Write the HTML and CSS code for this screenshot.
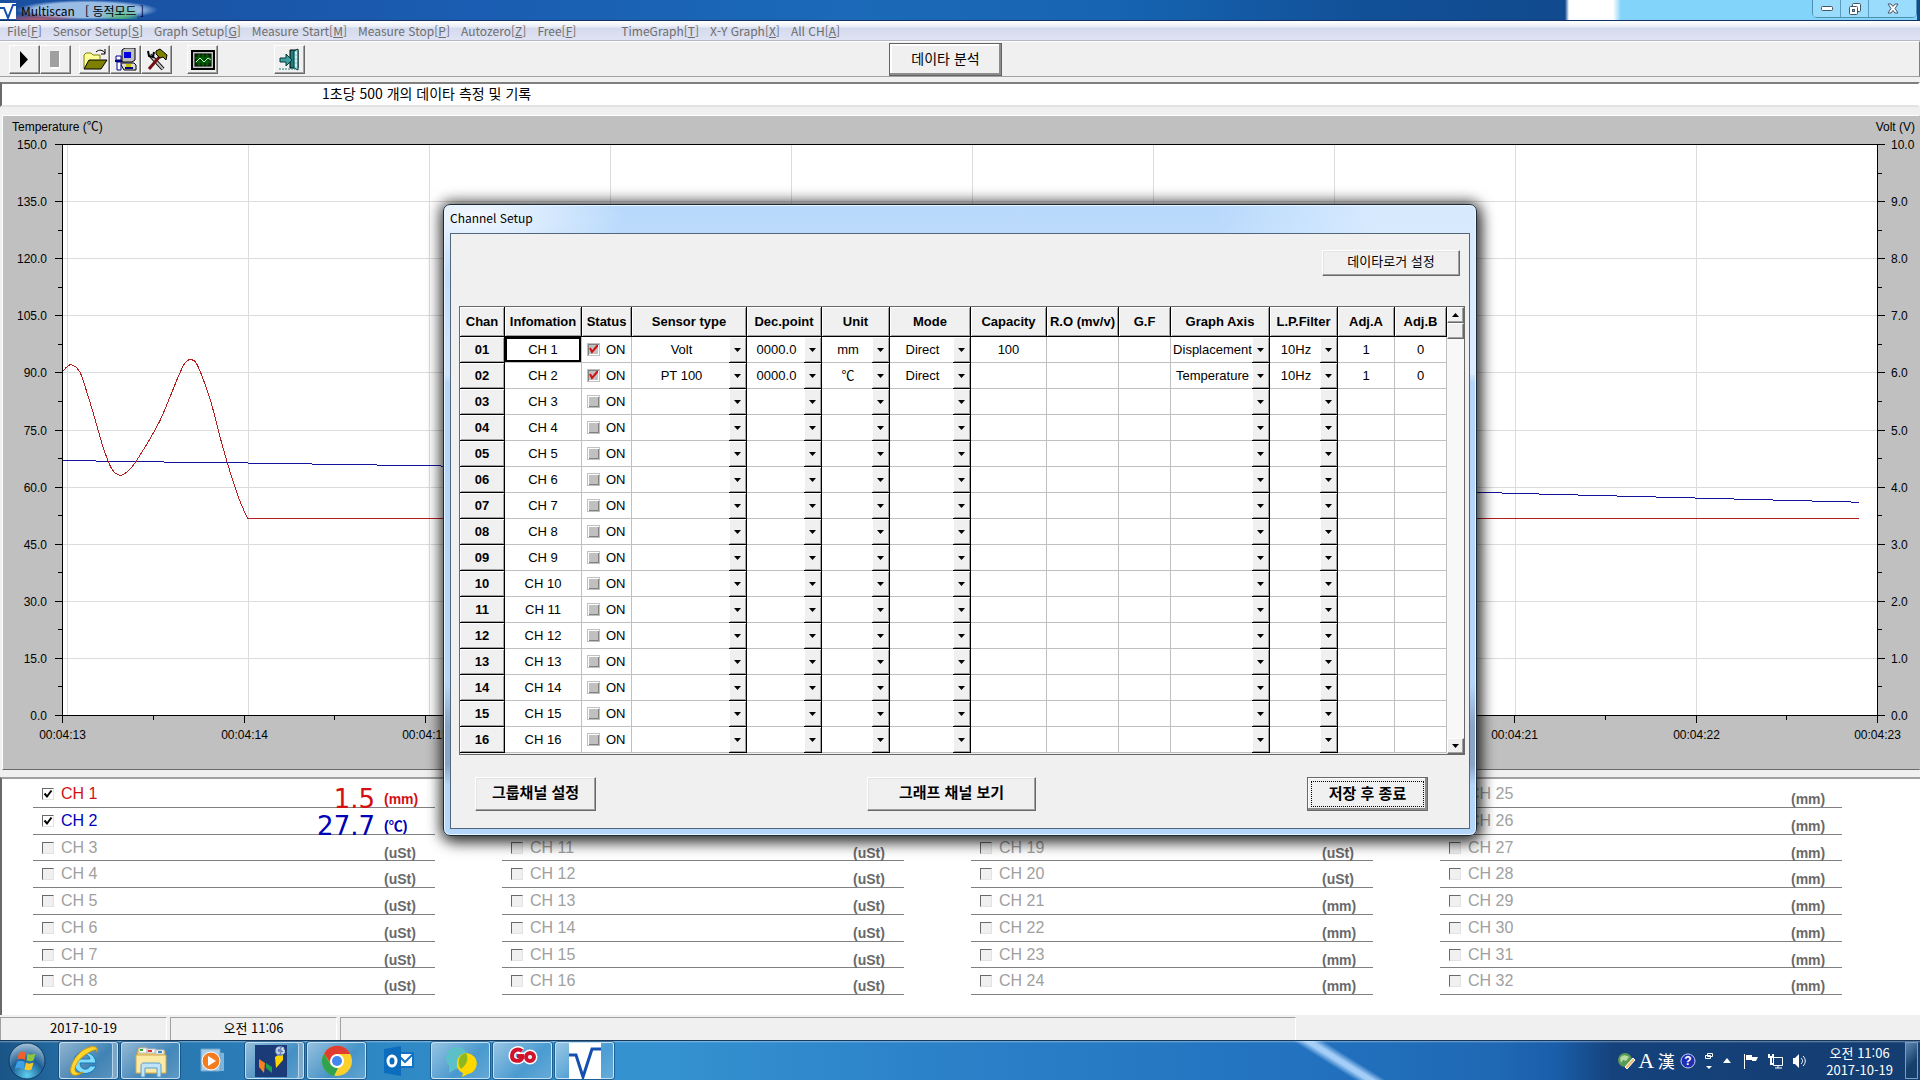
FILE: index.html
```html
<!DOCTYPE html>
<html lang="ko">
<head>
  <meta charset="UTF-8" />
  <meta name="viewport" content="width=device-width, initial-scale=1" />
  <title>Multiscan</title>
  <link rel="stylesheet" href="styles.css">
</head>
<body>
  <main class="app">
    <header class="titlebar">
      <svg class="app-icon" viewBox="0 0 16 16"><rect width="16" height="16" fill="#fff"/><path d="M0 5h4l4 10 5-13h3" fill="none" stroke="#1450b0" stroke-width="2"/></svg>
      <h1 class="app-title">Multiscan &nbsp; [ <span class="mode">동적모드</span> ]</h1>
      <div class="behind"></div>
      <div class="window-buttons">
        <button type="button" aria-label="Minimize"><svg width="12" height="5"><rect x=".5" y=".5" width="11" height="4" rx="1" fill="#fff" stroke="#456"/></svg></button>
        <button type="button" aria-label="Restore"><svg width="12" height="12" fill="#fff" stroke="#456"><rect x="3.500" y=".5" width="8" height="8" rx="1"/><rect x=".5" y="3.500" width="8" height="8" rx="1"/><rect x="3.500" y="6.500" width="2" height="2" fill="#8bd"/></svg></button>
        <button type="button" class="close" aria-label="Close"><svg width="12" height="11"><path d="M1 1h3l2 2.500L8 1h3L8 5.500 11 10H8L6 7.500 4 10H1l3-4.500z" fill="#fff" stroke="#456"/></svg></button>
      </div>
    </header>

    <nav class="menubar">
      <a href="#">File[<u>F</u>]</a>
      <a href="#">Sensor Setup[<u>S</u>]</a>
      <a href="#">Graph Setup[<u>G</u>]</a>
      <a href="#">Measure Start[<u>M</u>]</a>
      <a href="#">Measure Stop[<u>P</u>]</a>
      <a href="#">Autozero[<u>Z</u>]</a>
      <a href="#">Free[<u>F</u>]</a>
      <a href="#" class="graphs">TimeGraph[<u>T</u>]</a>
      <a href="#">X-Y Graph[<u>X</u>]</a>
      <a href="#">All CH[<u>A</u>]</a>
    </nav>

    <div class="toolbar">
      <div class="tool-group">
        <button type="button" aria-label="Start"><svg width="24" height="24"><path d="M7 3l8 8.500L7 20z" fill="#000"/></svg></button>
        <button type="button" aria-label="Stop"><svg width="24" height="24"><path d="M7 4h9v17H7z" fill="#fff"/><path d="M6 3h9v16H6z" fill="#a0a0a0"/></svg></button>
      </div>
      <div class="tool-group">
        <button type="button" aria-label="Open"><svg width="26" height="24"><path d="M2 20V7l2-2h5l2 2h7v4" fill="#ffff9c" stroke="#808000"/><path d="M2 21l5-9h18l-6 9z" fill="#808000" stroke="#000"/><path d="M14 4c3-3 7-2 9 1m0-4v5h-4" fill="none" stroke="#000"/></svg></button>
        <button type="button" aria-label="Sensor setup"><svg width="24" height="24"><path d="M8 2l3-2h10v12l-3 2H8z" fill="#c0c0c0" stroke="#000"/><rect x="10" y="4" width="7" height="6" fill="#0000e0"/><path d="M6 15h14l2 2v5H10z" fill="#d8d8d8" stroke="#000"/><path d="M2 8h5v4H2zM3 14h4v8H3z" fill="#fff" stroke="#000080"/><path d="M1 12h7v2H1z" fill="#000080"/><path d="M12 16h5v3h-5z" fill="#c8c000"/><path d="M11 20h8" stroke="#000080" stroke-width="2"/></svg></button>
        <button type="button" aria-label="Tools"><svg width="24" height="24"><path d="M5 7l13 14" stroke="#000" stroke-width="4"/><path d="M5 7l13 14" stroke="#c0c0c0" stroke-width="2"/><path d="M3 3l1 5 4 1 1-5" fill="none" stroke="#000" stroke-width="2"/><path d="M16 7L4 21" stroke="#701010" stroke-width="3"/><path d="M11 3l4-2 7 6-1 5-3-3-3 1-4-4z" fill="#808000" stroke="#000"/></svg></button>
      </div>
      <div class="tool-group graph">
        <button type="button" aria-label="Graph"><svg width="24" height="24"><rect x="1" y="3" width="22" height="18" fill="#c0c0c0" stroke="#000" stroke-width="2"/><rect x="4" y="6" width="16" height="12" fill="#063806" stroke="#000"/><path d="M4 10h16M4 14h16M8 6v12M12 6v12M16 6v12" stroke="#087008"/><path d="M5 14l4-4 4 4 4-4 3 2" fill="none" stroke="#b8ffd0"/></svg></button>
      </div>
      <div class="tool-group exit">
        <button type="button" aria-label="Exit"><svg width="24" height="24"><path d="M12 2h8v18h-8z" fill="#208080" stroke="#000"/><path d="M16 3l4-2v21l-4-2z" fill="#a0e0e0" stroke="#003838"/><path d="M18 4v15" stroke="#fff" stroke-dasharray="2 2"/><path d="M2 10h6V6l6 6-6 6v-4H2z" fill="#40a0a0" stroke="#003838"/><path d="M1 21h16" stroke="#208080" stroke-dasharray="2 1"/></svg></button>
      </div>
      <button type="button" class="analyze">데이타 분석</button>
    </div>

    <p class="message">1초당 500 개의 데이타 측정 및 기록</p>

    <section class="graph-panel">
      <svg id="graph" class="graph-svg" role="img" aria-label="Time graph"></svg>
    </section>

    <section class="channels" id="channels"></section>

    <footer class="statusbar">
      <span>2017-10-19</span>
      <span>오전 11:06</span>
      <span class="wide"></span>
    </footer>

    <div class="dialog-layer">
      <section class="dialog" role="dialog" aria-labelledby="dialog-title">
        <h2 class="dialog-title" id="dialog-title">Channel Setup</h2>
        <div class="dialog-body">
          <div class="dialog-top">
            <button type="button" class="btn logger">데이타로거 설정</button>
          </div>
          <div class="grid-box">
            <table class="setup">
              <colgroup>
                <col class="c-chan"><col class="c-info"><col class="c-status"><col class="c-sensor"><col class="c-dec"><col class="c-unit"><col class="c-mode"><col class="c-cap"><col class="c-ro"><col class="c-gf"><col class="c-axis"><col class="c-filter"><col class="c-adja"><col class="c-adjb">
              </colgroup>
              <thead>
                <tr>
                  <th>Chan</th><th>Infomation</th><th>Status</th><th>Sensor type</th><th>Dec.point</th><th>Unit</th><th>Mode</th><th>Capacity</th><th>R.O (mv/v)</th><th>G.F</th><th>Graph Axis</th><th>L.P.Filter</th><th>Adj.A</th><th>Adj.B</th>
                </tr>
              </thead>
              <tbody id="setup-rows"></tbody>
            </table>
            <div class="scrollbar">
              <button type="button" aria-label="Scroll up"><svg width="7" height="4"><path d="M0 4h7L3.500 0z"/></svg></button>
              <div class="thumb"></div>
              <button type="button" class="down" aria-label="Scroll down"><svg width="7" height="4"><path d="M0 0h7L3.500 4z"/></svg></button>
            </div>
          </div>
          <div class="dialog-actions">
            <button type="button" class="btn group">그룹채널 설정</button>
            <button type="button" class="btn view">그래프 채널 보기</button>
            <button type="button" class="btn save"><span>저장 후 종료</span></button>
          </div>
        </div>
      </section>
    </div>
  </main>

  <footer class="taskbar">
    <button type="button" class="start" aria-label="Start">
      <svg width="38" height="38" viewBox="0 0 38 38">
        <defs><radialGradient id="orb" cx=".5" cy=".9" r=".9"><stop offset="0" stop-color="#5fd0f0"/><stop offset=".5" stop-color="#1c5f96"/><stop offset="1" stop-color="#a8c4d8"/></radialGradient></defs>
        <circle cx="19" cy="19" r="18" fill="url(#orb)" stroke="#0d3a60"/>
        <path d="M11 11c3-2 5-1 7 0l-1 7c-3-1-5-2-8 0z" fill="#f0602c"/><path d="M19.500 11.500c3 2 5 1 8 0l-2 7c-2 1-4 1-7 0z" fill="#8cc63c"/>
        <path d="M9 20c3-2 5-1 7.500 0l-1 7c-3-1-5-2-8.500 0z" fill="#3fa0ea"/><path d="M18 20.500c3 2 5 1 7.500 0l-2 7c-2 1-4 1-7 0z" fill="#fcc628"/>
      </svg>
    </button>
    <button type="button" class="task stacked" aria-label="Internet Explorer">
      <svg width="34" height="34" viewBox="0 0 34 34"><path d="M28 19H12c0 7 8 8 10 3h6c-4 11-22 10-22-4S27 5 28 19zM12 15h10c-1-6-9-6-10 0z" fill="#7fdcff" stroke="#1879b8"/><path d="M29 8c2-8-8-6-15-1C6 13 1 24 3 29c2 4 8 2 12-1-4 2-9 1-8-4 1-5 7-12 13-15 5-3 10-5 9-1z" fill="#fcd62c" stroke="#d09a10"/></svg>
    </button>
    <button type="button" class="task" aria-label="Explorer">
      <svg width="34" height="34" viewBox="0 0 34 34"><path d="M3 8l1-4h9l2 3h16v22H3z" fill="#f0d27a" stroke="#b89440"/><path d="M5 4h8v5H5zM13 5h9v4h-9zM21 6h9v4h-9z" fill="#fff" stroke="#bbb"/><path d="M6 5h3v2H6z" fill="#3a3"/><path d="M14 6h4v2h-4z" fill="#d33"/><path d="M24 7h4v2h-4z" fill="#38c"/><path d="M2 11h30v18H2z" fill="#fbe9a6" stroke="#d0ac50"/><path d="M7 33V22c0-2 1-3 3-3h14c2 0 3 1 3 3v11h-4v-9H11v9z" fill="#bfe4f7" stroke="#5b9fc8"/></svg>
    </button>
    <button type="button" class="task flat" aria-label="Media Player">
      <svg width="26" height="26" viewBox="0 0 26 26"><path d="M7 3l17 2v18H7z" fill="#7fb4da"/><path d="M1 1h19v22H1z" fill="#a8cde8" stroke="#6fa3cc"/><circle cx="11" cy="13" r="9" fill="#f47c20" stroke="#fff"/><path d="M8 8l8 5-8 5z" fill="#fff"/></svg>
    </button>
    <button type="button" class="task stacked" aria-label="CS">
      <svg width="32" height="32" viewBox="0 0 32 32"><rect width="32" height="32" fill="#1b3a78"/><path d="M4 14l6 4-1 10-5-6z" fill="#f58220"/><path d="M11 18l6 4v6l-6-5z" fill="#1fa04a"/><path d="M20 12l8-5v8l-7 8z" fill="#ffd400"/><circle cx="25" cy="6" r="5" fill="#6b86b8"/><path d="M25 3h-3v5h3M29 3h-2v2h2v3h-3" fill="none" stroke="#fff"/></svg>
    </button>
    <button type="button" class="task" aria-label="Chrome">
      <svg width="32" height="32" viewBox="0 0 32 32"><circle cx="16" cy="16" r="15" fill="#fbd02c"/><path d="M3 8.500A15 15 0 0 1 29.500 9H16l-6 10z" fill="#e03c30"/><path d="M3 8.500L10 20l7 3-4 8A15 15 0 0 1 3 8.500z" fill="#2fa350"/><circle cx="16" cy="16" r="7" fill="#fff"/><circle cx="16" cy="16" r="5" fill="#4286f0"/></svg>
    </button>
    <button type="button" class="task flat" aria-label="Outlook">
      <svg width="32" height="32" viewBox="0 0 32 32"><path d="M14 8h16v14H14z" fill="#fff" stroke="#1273c4" stroke-width="2"/><path d="M16 11l6 6 8-8" fill="none" stroke="#1273c4" stroke-width="2"/><path d="M1 4l17-3v30L1 28z" fill="#0c6cbd"/><ellipse cx="9" cy="16" rx="4" ry="5" fill="none" stroke="#fff" stroke-width="3"/></svg>
    </button>
    <button type="button" class="task" aria-label="Messenger">
      <svg width="34" height="32" viewBox="0 0 34 32"><circle cx="13" cy="13" r="11" fill="#5cc0c8"/><path d="M5 20v8l8-5z" fill="#5cc0c8"/><path d="M22 8c16 2 12 20 2 21l-6 3 1-4c-9-3-8-19 3-20z" fill="#ffd800"/><path d="M22 8c2 4 3 10-5 16-5-6-2-15 5-16z" fill="#8db820"/></svg>
    </button>
    <button type="button" class="task" aria-label="Go">
      <svg width="32" height="32" viewBox="0 0 32 32"><g fill="none" stroke="#fff" stroke-width="7"><path d="M15 6c-4-3-10-1-10 5s8 6 10 2v-2h-5"/><circle cx="23" cy="12" r="4"/></g><g fill="none" stroke="#d0142c" stroke-width="4"><path d="M15 6c-4-3-10-1-10 5s8 6 10 2v-2h-5"/><circle cx="23" cy="12" r="4"/></g></svg>
    </button>
    <button type="button" class="task" aria-label="Multiscan">
      <svg width="32" height="36" viewBox="0 0 32 36"><rect width="32" height="36" fill="#fff"/><path d="M0 12h7l7 22L23 6h9" fill="none" stroke="#1450b0" stroke-width="3"/></svg>
    </button>

    <div class="tray">
      <svg width="18" height="18"><circle cx="7" cy="8" r="7" fill="#5a9a58"/><path d="M2 6c3-4 6-3 9-1l-3 4-3-1-2 3z" fill="#b8dca0"/><path d="M7 15l8-9 2 2-8 9z" fill="#f0c070" stroke="#fff"/></svg>
      <span class="ime latin">A</span>
      <span class="ime">漢</span>
      <svg width="16" height="16"><circle cx="8" cy="8" r="7" fill="#1c2cb4" stroke="#c8d0f0"/><text x="8" y="12" class="help-mark">?</text></svg>
      <svg class="lang-opts" width="10" height="18" fill="none" stroke="#fff"><path d="M3.500 1.500h5v3h-5zM1.500 3.500h5v3h-5z"/><path d="M2 14h6l-3 3z" fill="#fff" stroke="none"/></svg>
      <svg class="more" width="8" height="5"><path d="M0 5h8L4 0z" fill="#fff"/></svg>
      <svg class="flag" width="16" height="16"><path d="M1 1h1v15H1z" fill="#fff"/><path d="M3 2h6v2h6l-2 4H9V7H3z" fill="#fff"/></svg>
      <svg class="net" width="16" height="16" fill="none" stroke="#fff"><path d="M5.500 4.500h9v8h-9zM7 15h7M10 13v2"/><path d="M1 1v3h4V1M3 4v7h3" stroke-width="2"/></svg>
      <svg class="sound" width="16" height="16"><path d="M1 5h2l4-4v14l-4-4H1z" fill="#fff"/><path d="M9 5c2 2 2 4 0 6M11 3c3 3 3 7 0 10" fill="none" stroke="#fff"/></svg>
      <div class="clock"><span>오전 11:06</span><span>2017-10-19</span></div>
    </div>
    <button type="button" class="show-desktop" aria-label="Show desktop"></button>
  </footer>

  <script src="script.js"></script>
</body>
</html>
```
FILE: styles.css
```css
* {
  box-sizing: border-box;
}

html, body {
  height: 100%;
  margin: 0;
  overflow: hidden;
}

body {
  display: flex;
  flex-direction: column;
  background: #f0f0f0;
  color: #000;
  font-family: "Liberation Sans", "Noto Sans CJK KR", sans-serif;
  font-size: 13px;
}

button {
  padding: 0;
  font-family: "Noto Sans CJK KR", sans-serif;
  font-size: 13px;
  color: #000;
}

.app {
  position: relative;
  flex: 1;
  min-height: 0;
  display: flex;
  flex-direction: column;
}

/* title bar */
.titlebar {
  display: flex;
  align-items: flex-start;
  height: 21px;
  background: linear-gradient(90deg, #1a4fa0 0%, #1a5db2 25%, #1b6ab8 45%, #1664b2 58%, #114f96 72%, #114a8e 81%);
  border-bottom: 1px solid #123266;
}

.app-icon {
  width: 16px;
  height: 16px;
  margin-top: 3px;
}

.app-title {
  margin: 0;
  padding: 1px 14px 0 5px;
  font-family: "Noto Sans CJK KR", sans-serif;
  font-size: 12px;
  font-weight: normal;
  line-height: 19px;
  background: radial-gradient(ellipse at 16% 100%, rgba(235, 90, 90, 0.8), transparent 25%), radial-gradient(ellipse closest-side, rgba(185, 215, 245, 0.8) 75%, transparent);
}

.mode {
  background: radial-gradient(ellipse at 65% 90%, rgba(80, 190, 110, 0.8), transparent 60%);
}

/* what shows through the glass */
.behind {
  flex: none;
  width: 352px;
  height: 20px;
  margin-left: auto;
  margin-right: -105px;
  background: linear-gradient(90deg, transparent, #fff 4px, #fff 48px, #82d4fa 56px, #82d4fa);
}

.window-buttons {
  display: flex;
  height: 18px;
  margin-right: 3px;
  border: 1px solid #4c90b4;
  border-top: 0;
  border-radius: 0 0 5px 5px;
}

.window-buttons button {
  display: flex;
  align-items: center;
  justify-content: center;
  width: 28px;
  border: 0;
  border-right: 1px solid #5a9cc0;
  background: rgba(190, 232, 252, 0.4);
}

.window-buttons .close {
  width: 47px;
  border-right: 0;
}

/* menu */
.menubar {
  display: flex;
  gap: 11px;
  height: 20px;
  padding-left: 7px;
  background: linear-gradient(#fff, #e9edf6 6px, #d4daed 7px, #dfe3f4);
  border-bottom: 1px solid #b4b8c4;
  font-family: "Noto Sans CJK KR", sans-serif;
  font-size: 12px;
  line-height: 20px;
}

.menubar a {
  color: #6d6d6d;
  text-decoration: none;
}

.menubar .graphs {
  margin-left: 34px;
}

/* toolbar */
.toolbar {
  position: relative;
  display: flex;
  gap: 8px;
  height: 36px;
  padding: 3px 0 0 9px;
  border-top: 1px solid #fff;
  border-right: 1px solid #808080;
  border-bottom: 1px solid #a0a0a0;
}

.tool-group {
  display: flex;
}

.tool-group.graph {
  margin-left: 7px;
}

.tool-group.exit {
  margin-left: 48px;
}

.tool-group button {
  display: flex;
  align-items: center;
  justify-content: center;
  width: 31px;
  height: 29px;
  border: 1px solid;
  border-color: #fff #696969 #696969 #fff;
  background: #f0f0f0;
  box-shadow: inset -1px -1px #a0a0a0;
}

.analyze {
  width: 113px;
  height: 33px;
  margin: -2px 0 0 576px;
  padding-bottom: 4px;
  border: 1px solid #646464;
  background: #f0f0f0;
  box-shadow: inset -2px -2px #8c8c8c, inset 2px 2px #fff;
  font-size: 14px;
}

.message {
  height: 25px;
  margin: 5px 0 8px;
  padding-left: 320px;
  border: 2px solid;
  border-color: #808080 #fff #e3e3e3 #696969;
  background: #fff;
  font-family: "Noto Sans CJK KR", sans-serif;
  font-size: 14px;
  line-height: 19px;
}

/* graph */
.graph-panel {
  flex: 1;
  min-height: 0;
  margin-left: 2px;
  border: 1px solid;
  border-color: #fff transparent #696969 #fff;
  background: #c0c0c0;
  overflow: hidden;
}

.graph-svg {
  display: block;
  width: 100%;
  height: 100%;
  font-size: 12px;
  shape-rendering: crispEdges;
}

.graph-svg .grid-line { stroke: #dcdcdc; }
.graph-svg .axis { stroke: #000; }
.graph-svg .trace { fill: none; }
.graph-svg .ch1 { stroke: #b41e1e; }
.graph-svg .ch2 { stroke: #14149b; }
.graph-svg .end { text-anchor: end; }
.graph-svg .middle { text-anchor: middle; }

/* channel values */
.channels {
  flex: none;
  height: 238px;
  display: grid;
  grid-template-columns: repeat(4, 1fr);
  grid-template-rows: repeat(8, minmax(0, 1fr));
  grid-auto-flow: column;
  column-gap: 67px;
  margin-top: 7px;
  padding: 2px 78px 20px 31px;
  border: 2px solid;
  border-color: #a0a0a0 transparent transparent #696969;
  border-right: 0;
  border-bottom: 0;
  background: #fff;
}

.channel {
  display: grid;
  grid-template-columns: 1fr 60px;
  min-height: 0;
  border-bottom: 1px solid #808080;
  color: #a0a0a0;
  line-height: 26px;
}

.channel label {
  display: flex;
  align-items: center;
  gap: 7px;
  height: 26px;
  padding-left: 9px;
  grid-area: 1 / 1;
  font-size: 16px;
}

.channel input {
  appearance: none;
  width: 12px;
  height: 12px;
  margin: 0;
  border: 1px solid;
  border-color: #696969 #e3e3e3 #e3e3e3 #696969;
  background: #f0f0f0;
}

.channel input:checked {
  background: #fff url("data:image/svg+xml,%3Csvg xmlns='http://www.w3.org/2000/svg' viewBox='0 0 10 10'%3E%3Cpath d='M1.500 4.500l2.500 3 4.500-6' fill='none' stroke='%23000' stroke-width='2'/%3E%3C/svg%3E");
}

.channel .value {
  grid-area: 1 / 1;
  justify-self: end;
  font-family: "DejaVu Sans", sans-serif;
  font-size: 26px;
  line-height: 36px;
}

.channel .unit {
  padding: 5px 0 0 9px;
  color: #696969;
  font-size: 14px;
  font-weight: bold;
}

.channel.red,
.channel.red .unit {
  color: #d40f14;
}

.channel.blue,
.channel.blue .unit {
  color: #0000b4;
}

/* status bar */
.statusbar {
  display: flex;
  gap: 3px;
  height: 25px;
  padding-top: 2px;
}

.statusbar span {
  flex: 0 0 167px;
  border-top: 1px solid #a0a0a0;
  border-left: 1px solid #a0a0a0;
  border-right: 1px solid #fff;
  text-align: center;
  font-family: "Noto Sans CJK KR", sans-serif;
  line-height: 20px;
}

.statusbar .wide {
  flex: 0 0 calc(50% - 4px);
}

/* dialog */
.dialog-layer {
  position: absolute;
  inset: 0;
  display: flex;
  align-items: center;
  justify-content: center;
}

.dialog {
  padding: 0 6px 6px;
  border: 1px solid #1e2a38;
  border-radius: 7px;
  background:
    radial-gradient(ellipse 150px 60px at 30px 10px, #f2f8ff, transparent),
    linear-gradient(90deg, transparent 75%, rgba(222, 238, 255, 0.8) 90%) top / 100% 170px no-repeat,
    linear-gradient(#b8d9fc 0, #d0e5fc 170px, #b4d6fa 178px, #b4d6fa 480px, #8aa5c6 520px, #8aa5c6 560px, #b4d6fa 580px);
  box-shadow: inset 0 0 0 1px #eaf5ff, 0 0 14px 3px rgba(0, 0, 0, 0.6), 3px 6px 16px rgba(0, 0, 0, 0.6);
}

.dialog-title {
  margin: 0;
  height: 28px;
  font-family: "Noto Sans CJK KR", sans-serif;
  font-size: 12px;
  font-weight: normal;
  line-height: 26px;
}

.dialog-body {
  padding: 16px 4px 17px 8px;
  border: 1px solid #52667e;
  background: #f0f0f0;
}

.dialog-top {
  display: flex;
  justify-content: flex-end;
  padding-right: 5px;
  margin-bottom: 30px;
}

.btn {
  height: 34px;
  padding-bottom: 5px;
  border: 1px solid;
  border-color: #fff #696969 #696969 #fff;
  background: #f0f0f0;
  box-shadow: inset -1px -1px #a0a0a0, inset 1px 1px #e3e3e3;
  font-size: 15px;
  font-weight: bold;
}

.btn.logger {
  width: 138px;
  height: 26px;
  font-size: 13px;
  font-weight: normal;
}

.btn.group { width: 121px; }
.btn.view { width: 169px; }

.btn.save {
  display: flex;
  width: 121px;
  padding: 3px;
  border-color: #696969;
  box-shadow: inset -2px -2px #8c8c8c, inset 1px 1px #fff;
}

.btn.save span {
  flex: 1;
  height: 26px;
  border: 1px dotted #000;
  line-height: 21px;
}

.dialog-actions {
  display: flex;
  justify-content: space-between;
  padding: 22px 37px 0 16px;
}

.grid-box {
  display: flex;
  border: 1px solid #696969;
}

.setup {
  table-layout: fixed;
  width: 987px;
  margin-bottom: 1px;
  border-collapse: separate;
  border-spacing: 0;
  background: #fff;
}

.c-chan { width: 45px; }
.c-info { width: 77px; }
.c-status { width: 50px; }
.c-sensor { width: 115px; }
.c-dec { width: 75px; }
.c-unit { width: 68px; }
.c-mode { width: 81px; }
.c-cap { width: 76px; }
.c-ro { width: 72px; }
.c-gf { width: 52px; }
.c-axis { width: 99px; }
.c-filter { width: 68px; }
.c-adja { width: 57px; }
.c-adjb { width: 52px; }

.setup th {
  height: 30px;
  padding: 0;
  border-right: 1px solid #000;
  border-bottom: 1px solid #000;
  background: #f0f0f0;
  box-shadow: inset 1px 1px #fff, inset -1px -1px #a0a0a0;
  white-space: nowrap;
}

.setup tbody th,
.setup td {
  height: 26px;
}

.setup td {
  padding: 0;
  border-right: 1px solid #c0c0c0;
  border-bottom: 1px solid #c0c0c0;
  text-align: center;
  white-space: nowrap;
}

.setup td.selected {
  box-shadow: inset 0 0 0 2px #000;
}

.setup td.combo {
  border: 0;
}

.combo-box {
  display: grid;
  height: 26px;
  border-right: 1px solid #000;
}

.combo-box select {
  grid-area: 1 / 1;
  appearance: none;
  min-width: 0;
  padding: 0 15px 0 0;
  border: 0;
  border-bottom: 1px solid #c0c0c0;
  border-radius: 0;
  background: #fff;
  color: #000;
  font: inherit;
  text-align: center;
  text-align-last: center;
}

.combo-box .arrow {
  grid-area: 1 / 1;
  justify-self: end;
  display: flex;
  align-items: center;
  justify-content: center;
  width: 17px;
  border-bottom: 1px solid #000;
  background: #f0f0f0;
  box-shadow: inset 1px 1px #fff, inset -1px -1px #a0a0a0;
  pointer-events: none;
}

.status {
  display: flex;
  align-items: center;
  gap: 6px;
  padding-left: 5px;
}

.status input {
  appearance: none;
  width: 13px;
  height: 13px;
  margin: 0;
  border: 1px solid #c0c0c0;
  background: #c0c0c0;
  box-shadow: inset 1px 1px #fff, inset -1px -1px #808080;
}

.status input:checked {
  background: #c0c0c0 url("data:image/svg+xml,%3Csvg xmlns='http://www.w3.org/2000/svg' viewBox='0 0 11 11'%3E%3Cpath d='M2 4l2 4 6-7' fill='none' stroke='%23d01010' stroke-width='2'/%3E%3C/svg%3E");
  box-shadow: inset 1px 1px #808080, inset -1px -1px #fff;
}

.scrollbar {
  flex: 1;
  display: flex;
  flex-direction: column;
  min-width: 17px;
  background: #f8f8f8;
}

.scrollbar button,
.thumb {
  display: flex;
  align-items: center;
  justify-content: center;
  width: 17px;
  height: 16px;
  border: 1px solid;
  border-color: #fff #696969 #696969 #fff;
  background: #f0f0f0;
  box-shadow: inset -1px -1px #a0a0a0;
}

.scrollbar .down {
  margin-top: auto;
}

/* taskbar */
.taskbar {
  display: flex;
  align-items: stretch;
  gap: 3px;
  height: 40px;
  padding: 1px 2px 1px 0;
  border-top: 1px solid #16395c;
  background:
    linear-gradient(rgba(255, 255, 255, 0.4), transparent 2px),
    linear-gradient(32deg, transparent 41%, #a4cef8 48%, #a4cef8 52%, transparent 59%) 71% 0 / 110px 40px no-repeat,
    linear-gradient(90deg, #1a5486 0, #2670a8 4%, #2e88c4 20%, #3592d0 34%, #2b80c8 50%, #2272bf 68%, #1f68b4 78%, #1a5eaa 81%, #15427c 84%, #143d70 100%);
}

.start {
  width: 56px;
  padding-left: 8px;
  border: 0;
  background: none;
  text-align: left;
}

.task {
  display: flex;
  align-items: center;
  justify-content: center;
  width: 59px;
  border: 1px solid rgba(225, 243, 255, 0.75);
  border-radius: 3px;
  background: linear-gradient(135deg, rgba(255, 255, 255, 0.5), rgba(255, 255, 255, 0.12) 60%, rgba(255, 255, 255, 0.25));
  box-shadow: 0 0 0 1px rgba(10, 50, 90, 0.5);
}

.task.flat {
  border-color: transparent;
  background: none;
  box-shadow: none;
}

.task.stacked {
  padding-right: 8px;
  box-shadow: inset -4px 0 rgba(20, 80, 130, 0.35), inset -5px 0 rgba(225, 243, 255, 0.7), 0 0 0 1px rgba(10, 50, 90, 0.5);
}

.tray {
  display: flex;
  align-items: center;
  margin-left: auto;
  color: #fff;
}

.ime {
  width: 20px;
  font-family: "Noto Sans CJK TC", sans-serif;
  font-size: 17px;
  line-height: 20px;
  text-align: center;
}

.ime.latin {
  font-family: "Liberation Serif", serif;
  font-size: 22px;
}

.tray .ime + svg {
  margin-left: 4px;
}

.help-mark {
  fill: #fff;
  font-size: 12px;
  font-weight: bold;
  text-anchor: middle;
}

.tray .lang-opts { margin-left: 8px; }
.tray .more { margin-left: 9px; }
.tray .flag { margin-left: 12px; }
.tray .net { margin-left: 9px; }
.tray .sound { margin-left: 8px; }

.clock {
  display: flex;
  flex-direction: column;
  margin-left: 18px;
  font-family: "Noto Sans CJK KR", sans-serif;
  font-size: 13px;
  line-height: 17px;
  text-align: center;
}

.show-desktop {
  width: 13px;
  margin-left: 9px;
  border: 1px solid #7c9dc0;
  background: linear-gradient(135deg, #5d86b0, #173f6c 60%);
}
```
FILE: script.js
```js
const SENSORS = [
  { sensor: 'Volt', dec: '0000.0', unit: 'mm', mode: 'Direct', cap: '100', axis: 'Displacement', filter: '10Hz', a: '1', b: '0' },
  { sensor: 'PT 100', dec: '0000.0', unit: '℃', mode: 'Direct', cap: '', axis: 'Temperature', filter: '10Hz', a: '1', b: '0' }
];

function combo(name, value = '') {
  return `<td class="combo"><div class="combo-box"><select aria-label="${name}"><option>${value}</option></select><span class="arrow"><svg width="7" height="4"><path d="M0 0h7L3.500 4z"/></svg></span></div></td>`;
}

function buildSetup() {
  let html = '';
  for (let i = 1; i <= 16; i++) {
    const s = SENSORS[i - 1] || {};
    html += `<tr>
      <th scope="row">${String(i).padStart(2, '0')}</th>
      <td class="${i === 1 ? 'selected' : ''}">CH ${i}</td>
      <td><label class="status"><input type="checkbox" ${s.sensor ? 'checked' : ''}>ON</label></td>
      ${combo('Sensor type', s.sensor)}
      ${combo('Dec.point', s.dec)}
      ${combo('Unit', s.unit)}
      ${combo('Mode', s.mode)}
      <td>${s.cap || ''}</td><td></td><td></td>
      ${combo('Graph Axis', s.axis)}
      ${combo('L.P.Filter', s.filter)}
      <td>${s.a || ''}</td><td>${s.b || ''}</td>
    </tr>`;
  }
  document.getElementById('setup-rows').innerHTML = html;
}

function buildChannels() {
  const live = { 1: ['red', '1.5', 'mm'], 2: ['blue', '27.7', '℃'] };
  let html = '';
  for (let i = 1; i <= 32; i++) {
    const [color, value, unit] = live[i] || ['', '', i <= 20 ? 'uSt' : 'mm'];
    html += `<div class="channel ${color}">
      <label><input type="checkbox" ${color ? 'checked' : 'disabled'}>CH ${i}</label>
      <output class="value">${value}</output>
      <span class="unit">(${unit})</span>
    </div>`;
  }
  document.getElementById('channels').innerHTML = html;
}

// [seconds, value on the left axis]
const CH1 = [
  [0, 90], [0.045, 92], [0.096, 90.3], [0.129, 86], [0.179, 78.2], [0.225, 70.6], [0.271, 64.9],
  [0.317, 63], [0.362, 64], [0.409, 66.7], [0.519, 75.4], [0.574, 81.1], [0.638, 88.6], [0.675, 92.3],
  [0.706, 93.4], [0.739, 92.5], [0.775, 88.6], [0.822, 82], [0.867, 73.7], [0.922, 64.5], [0.977, 56.6],
  [1.023, 51.6]
];
const CH1_END = 9.9;
const CH2 = [[0, 66.9], [0.317, 66.6], [1.02, 66.2], [2.1, 65.4], [7.79, 58.5], [8.02, 58.2], [9, 57], [9.9, 55.9]];

// Catmull-Rom through the points, as bezier segments
function smoothPath(p) {
  let d = `M${p[0]}`;
  for (let i = 0; i < p.length - 1; i++) {
    const a = p[i - 1] || p[i], b = p[i], c = p[i + 1], e = p[i + 2] || c;
    d += `C${b[0] + (c[0] - a[0]) / 6},${b[1] + (c[1] - a[1]) / 6} ${c[0] - (e[0] - b[0]) / 6},${c[1] - (e[1] - b[1]) / 6} ${c}`;
  }
  return d;
}

function drawGraph() {
  const svg = document.getElementById('graph');
  const w = svg.clientWidth;
  const h = svg.clientHeight;
  const left = 59, top = 28, right = w - 42, bottom = h - 54;
  const sx = (right - left) / 10;
  const sy = (bottom - top) / 10;
  const snap = n => Math.round(n) + 0.5;
  const line = (x1, y1, x2, y2, cls) => `<line class="${cls}" x1="${x1}" y1="${y1}" x2="${x2}" y2="${y2}"/>`;
  const text = (x, y, s, cls = '') => `<text class="${cls}" x="${x}" y="${y}">${s}</text>`;
  const point = ([t, v]) => [left + t * sx, bottom - v / 15 * sy];

  let out = `<rect x="${left}" y="${top}" width="${right - left}" height="${bottom - top}" fill="#fff"/>`;
  for (let i = 0; i <= 10; i++) {
    const y = snap(top + i * sy);
    const gx = snap(left + 5 + i * 181);
    if (i > 0 && i < 10) out += line(left, y, right, y, 'grid-line');
    if (gx < right) out += line(gx, top, gx, bottom, 'grid-line');
  }
  out += `<polyline class="trace ch2" points="${CH2.map(point).join(' ')}"/>`;
  out += `<path class="trace ch1" d="${smoothPath(CH1.map(point))}H${left + CH1_END * sx}"/>`;
  out += line(snap(left), top, snap(left), bottom, 'axis') + line(snap(right), top, snap(right), bottom, 'axis');
  out += line(left, snap(top), right, snap(top), 'axis') + line(left, snap(bottom), right, snap(bottom), 'axis');

  for (let i = 0; i <= 20; i++) {
    const major = i % 2 === 0;
    const x = snap(left + i * sx / 2);
    const y = snap(top + i * sy / 2);
    out += line(left - (major ? 7 : 4), y, left, y, 'axis');
    out += line(right, y, right + (major ? 8 : 5), y, 'axis');
    out += line(x, bottom, x, bottom + (major ? 8 : 5), 'axis');
    if (major) {
      out += text(left - 15, y + 4, (150 - i * 7.5).toFixed(1), 'end');
      out += text(right + 14, y + 4, (10 - i / 2).toFixed(1));
      out += text(x, bottom + 24, `00:04:${13 + i / 2}`, 'middle');
    }
  }
  out += text(9, 15, 'Temperature (℃)') + text(w - 4, 15, 'Volt (V)', 'end');
  svg.innerHTML = out;
}

buildSetup();
buildChannels();
drawGraph();
window.addEventListener('resize', drawGraph);
```
